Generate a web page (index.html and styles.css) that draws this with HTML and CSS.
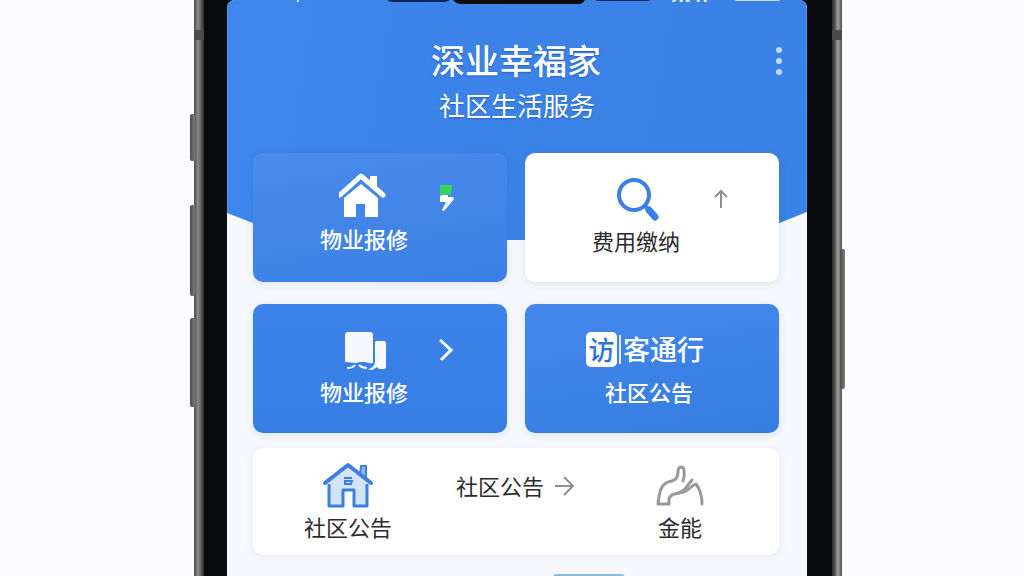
FILE: index.html
```html
<!DOCTYPE html>
<html lang="zh-CN">
<head>
    <meta charset="UTF-8">
    <meta name="viewport" content="width=device-width, initial-scale=1.0">
    <title>深业幸福家</title>
    <link rel="stylesheet" href="styles.css">
</head>
<body>
    <div class="phone">
        <span class="side-key key-mute"></span>
        <span class="side-key key-up"></span>
        <span class="side-key key-down"></span>
        <span class="side-key key-power"></span>
        <div class="bezel">
            <div class="screen">
                <header class="header">
                    <svg class="status" viewBox="0 0 580 6" preserveAspectRatio="none" aria-hidden="true">
                        <path d="M160 0h62v1l-4 1h-54z" fill="#0b2a5c"/>
                        <path d="M226 0h132q-2 4-6 4H234q-4 0-8-4z" fill="#0a0b0c"/>
                        <path d="M368 0h56l-3 1h-50z" fill="#0b2a5c"/>
                        <path d="M70 0h2v2h-2zM446 0h4l-2 2h-3zM453 0h3v2h-3zM459 0h4v2h-4zM470 0h3v2h-3zM477 0h3v2h-3z" fill="#dce9ff"/>
                        <path d="M508 0h45v1h-45z" fill="#c9dcfb"/>
                    </svg>
                    <div class="title-row">
                        <h1>深业幸福家</h1>
                        <button class="more" type="button" aria-label="更多">
                            <svg width="8" height="30" viewBox="0 0 8 30">
                                <circle cx="4" cy="5" r="3"/>
                                <circle cx="4" cy="16" r="3"/>
                                <circle cx="4" cy="27" r="3"/>
                            </svg>
                        </button>
                    </div>
                    <p class="subtitle">社区生活服务</p>
                </header>

                <main class="content">
                    <button class="card card-light-blue" type="button">
                        <svg class="icon" width="50" height="46" viewBox="0 0 50 46">
                            <path d="M22 11 5 25v19h12V31h9v13h13V25z" fill="#fff"/>
                            <path d="M0 22 22 3l22 19" fill="none" stroke="#4486e9" stroke-width="9" stroke-linejoin="round"/>
                            <path d="M31 3h7v13l-7-6z" fill="#fff"/>
                            <path d="M1 22 22 3l22 19" fill="none" stroke="#fff" stroke-width="5" stroke-linecap="round" stroke-linejoin="round"/>
                        </svg>
                        <svg class="mark" width="28" height="30" viewBox="0 0 28 30">
                            <path d="M6 5q0-1 1-1h10q1 0 1 1l-1 9-6-1-5 2z" fill="#32d65a"/>
                            <path d="M6 15q4-2 8-1v2h5l1 2-10 12-2-1 4-8H6z" fill="#fff"/>
                        </svg>
                        <span class="label">物业报修</span>
                    </button>

                    <button class="card card-white" type="button">
                        <svg class="icon" width="50" height="46" viewBox="0 0 50 46">
                            <circle cx="23" cy="20" r="15" fill="none" stroke="#3b7fe2" stroke-width="4"/>
                            <path d="m34 31 4 4" stroke="#3b7fe2" stroke-width="4"/>
                            <path d="m38 35 6 7" stroke="#3b7fe2" stroke-width="7" stroke-linecap="round"/>
                        </svg>
                        <svg class="mark" width="28" height="30" viewBox="0 0 28 30">
                            <path d="M15 25V8M9 14l6-6 6 6" fill="none" stroke="#8f8f8f" stroke-width="2"/>
                        </svg>
                        <span class="label">费用缴纳</span>
                    </button>

                    <button class="card" type="button">
                        <svg class="icon" width="50" height="46" viewBox="0 0 50 46">
                            <path d="M9 6h22q3 0 3 3v28q-4 1-7-1h-6l-4 1-11-1V9q0-3 3-3z" fill="#f6f9ff"/>
                            <path d="M37 15h8q2 0 2 2v24q0 2-2 2h-5l-2-2-3 2q-3 2-6 0 6-1 7-7V16z" fill="#f6f9ff"/>
                            <path d="M8 42q6 0 8-3m4 0q3 3 8 3" fill="none" stroke="#f6f9ff" stroke-width="2"/>
                        </svg>
                        <svg class="mark" width="28" height="30" viewBox="0 0 28 30">
                            <path d="m6 6 11 10L7 26" fill="none" stroke="#fff" stroke-width="3"/>
                        </svg>
                        <span class="label">物业报修</span>
                    </button>

                    <button class="card card-visitor" type="button">
                        <span class="visitor"><span class="badge">访</span><span class="badge-edge"></span>客通行</span>
                        <span class="label">社区公告</span>
                    </button>

                    <nav class="panel">
                        <a class="panel-item" href="#community">
                            <svg width="54" height="48" viewBox="0 0 54 48">
                                <path d="M40 5h5v15l-6-6z" fill="#8eb9f5" stroke="#3d7fe0" stroke-width="2"/>
                                <path d="M27 5 8 21v24h14V30h10v15h14V21z" fill="#d3e3fc"/>
                                <path d="M8 23v22h14V29h11v16h13V23" fill="none" stroke="#3d7fe0" stroke-width="3" stroke-linejoin="round"/>
                                <path d="M4 22 27 4l23 18" fill="none" stroke="#3d7fe0" stroke-width="4" stroke-linecap="round" stroke-linejoin="round"/>
                                <path d="M31 17h-8m8 3h-7v3h6z" fill="none" stroke="#3d7fe0" stroke-width="2"/>
                            </svg>
                            <span>社区公告</span>
                        </a>
                        <a class="panel-link" href="#notice">
                            <span>社区公告</span>
                            <svg width="22" height="22" viewBox="0 0 22 22">
                                <path d="M1 12h18M10 3l9 9-9 9" fill="none" stroke="#8f8f8f" stroke-width="2"/>
                            </svg>
                        </a>
                        <a class="panel-item" href="#energy">
                            <svg width="54" height="48" viewBox="0 0 54 48">
                                <g fill="none" stroke="#999" stroke-width="3" stroke-linecap="round" stroke-linejoin="round">
                                    <path d="M30 20q2-5 1-10 0-4-3-4t-3 5q0 7-6 9-8 1-11 8-2 5-3 15h11v-5q1-4 6-5 6-1 10-5l7-9"/>
                                    <path d="M26 32q7-1 11-5 3-3 6-4 6 8 6 20"/>
                                </g>
                            </svg>
                            <span>金能</span>
                        </a>
                    </nav>
                </main>
                <div class="next-section"></div>
            </div>
        </div>
    </div>
</body>
</html>
```

FILE: styles.css
```css
* {
    box-sizing: border-box;
}
body {
    margin: 0;
    padding-left: 12px;
    min-height: 100vh;
    display: flex;
    justify-content: center;
    background-color: #fcfcfe;
    color: #2b2b2d;
    font-family: 'Noto Sans CJK SC', sans-serif;
    overflow: hidden;
}
h1, p {
    margin: 0;
}
button {
    border: none;
    padding: 0;
    font: inherit;
    color: inherit;
    cursor: pointer;
}
a {
    color: inherit;
    text-decoration: none;
}
svg {
    display: block;
}

/* phone body */
.phone {
    position: relative;
    width: 64%;
    min-width: 600px;
    height: 100vh;
    padding: 0 10px;
    background: linear-gradient(90deg, #4b4b4a 0, #8b8b89 4px, #5d5d5b 7px, #2c2c2c 10px, #2c2c2c calc(100% - 10px), #555553 calc(100% - 7px), #a3a29e calc(100% - 4px), #4b4b4a 100%);
}
.phone::before {
    content: "";
    position: absolute;
    top: 30px;
    left: 0;
    width: 100%;
    height: 10px;
    background-color: #4b4b4a;
}
.side-key {
    position: absolute;
    width: 5px;
    border-radius: 2px;
    background: linear-gradient(90deg, #4a4a49, #7d7d7b);
}
.key-mute {
    left: -4px;
    top: 114px;
    height: 47px;
}
.key-up {
    left: -4px;
    top: 205px;
    height: 91px;
}
.key-down {
    left: -4px;
    top: 318px;
    height: 89px;
}
.key-power {
    right: -3px;
    top: 249px;
    height: 140px;
}
.bezel {
    position: relative;
    height: 100%;
    padding: 0 25px 0 23px;
    background-color: #0a0b0c;
}
.screen {
    height: 100%;
    background-color: #f6f8fd;
    border-radius: 8px 8px 0 0;
    overflow: hidden;
}

/* header */
.header {
    height: 240px;
    color: #fff;
    text-align: center;
    background: linear-gradient(100deg, #3e86ec, #3a80e5);
    clip-path: polygon(0 0, 100% 0, 100% calc(100% - 28px), 88% 100%, 12% 100%, 0 calc(100% - 27px));
}
.status {
    width: 100%;
    height: 6px;
}
.title-row {
    display: grid;
    grid-template-columns: 1fr 48px;
    align-items: center;
    padding: 30px 4px 0 50px;
}
h1 {
    font-size: 34px;
    line-height: 48px;
    font-weight: 500;
    text-shadow: 0 1px 2px #2a62b8;
}
.more {
    justify-self: center;
    padding: 4px 8px;
    background: none;
    fill: #c3d9fb;
}
.subtitle {
    font-size: 26px;
    line-height: 42px;
    font-weight: 400;
    text-shadow: 0 1px 2px #2a62b8;
}

/* cards */
.content {
    position: relative;
    display: grid;
    grid-template-columns: 1fr 1fr;
    gap: 22px 18px;
    margin-top: -87px;
    padding: 0 28px 0 26px;
}
.card {
    display: grid;
    grid-template-columns: 112px 28px;
    grid-template-rows: 46px 30px;
    gap: 4px 14px;
    align-content: center;
    justify-content: center;
    align-items: center;
    justify-items: center;
    height: 129px;
    padding: 0 0 5px 10px;
    border-radius: 10px;
    color: #fff;
    font-weight: 500;
    background: linear-gradient(#3b82e9, #377ee4);
    box-shadow: 0 2px 8px rgba(60, 90, 150, 0.12);
}
.card-light-blue {
    padding-bottom: 9px;
    background: linear-gradient(170deg, #4a8bee, #4285e7 50%, #3b80e4);
}
.card-white {
    color: #2b2b2d;
    font-weight: 400;
    background: #fff;
}
.label {
    font-size: 22px;
    line-height: 30px;
}
.card-visitor {
    grid-template-columns: auto;
    padding-left: 0;
    padding-right: 6px;
    background: linear-gradient(170deg, #4488ed, #377ce1);
}
.visitor {
    display: flex;
    align-items: center;
    font-size: 27px;
    line-height: 36px;
    padding-right: 8px;
}
.badge {
    width: 31px;
    height: 35px;
    border-radius: 5px;
    background-color: #fff;
    color: #2f72d6;
    font-size: 26px;
    line-height: 34px;
    text-align: center;
}
.badge-edge {
    width: 2px;
    height: 29px;
    margin: 0 2px;
    background-color: #dfeafc;
}

/* bottom panel */
.panel {
    grid-column: 1 / 3;
    display: grid;
    grid-template-columns: repeat(3, 1fr);
    margin-top: -7px;
    padding: 13px 16px 14px 12px;
    border-radius: 10px;
    background-color: #fefefe;
    box-shadow: 0 2px 8px rgba(60, 90, 150, 0.08);
    font-size: 22px;
    line-height: 30px;
}
.panel-item {
    display: flex;
    flex-direction: column;
    align-items: center;
    gap: 2px;
}
.panel-link {
    display: flex;
    align-items: center;
    justify-content: center;
    gap: 10px;
    height: 48px;
    padding-left: 4px;
    white-space: nowrap;
}
.next-section {
    width: 72px;
    height: 40px;
    margin: 19px auto 0;
    border-radius: 4px;
    background-color: #8db9e6;
    transform: translateX(72px);
}
```
